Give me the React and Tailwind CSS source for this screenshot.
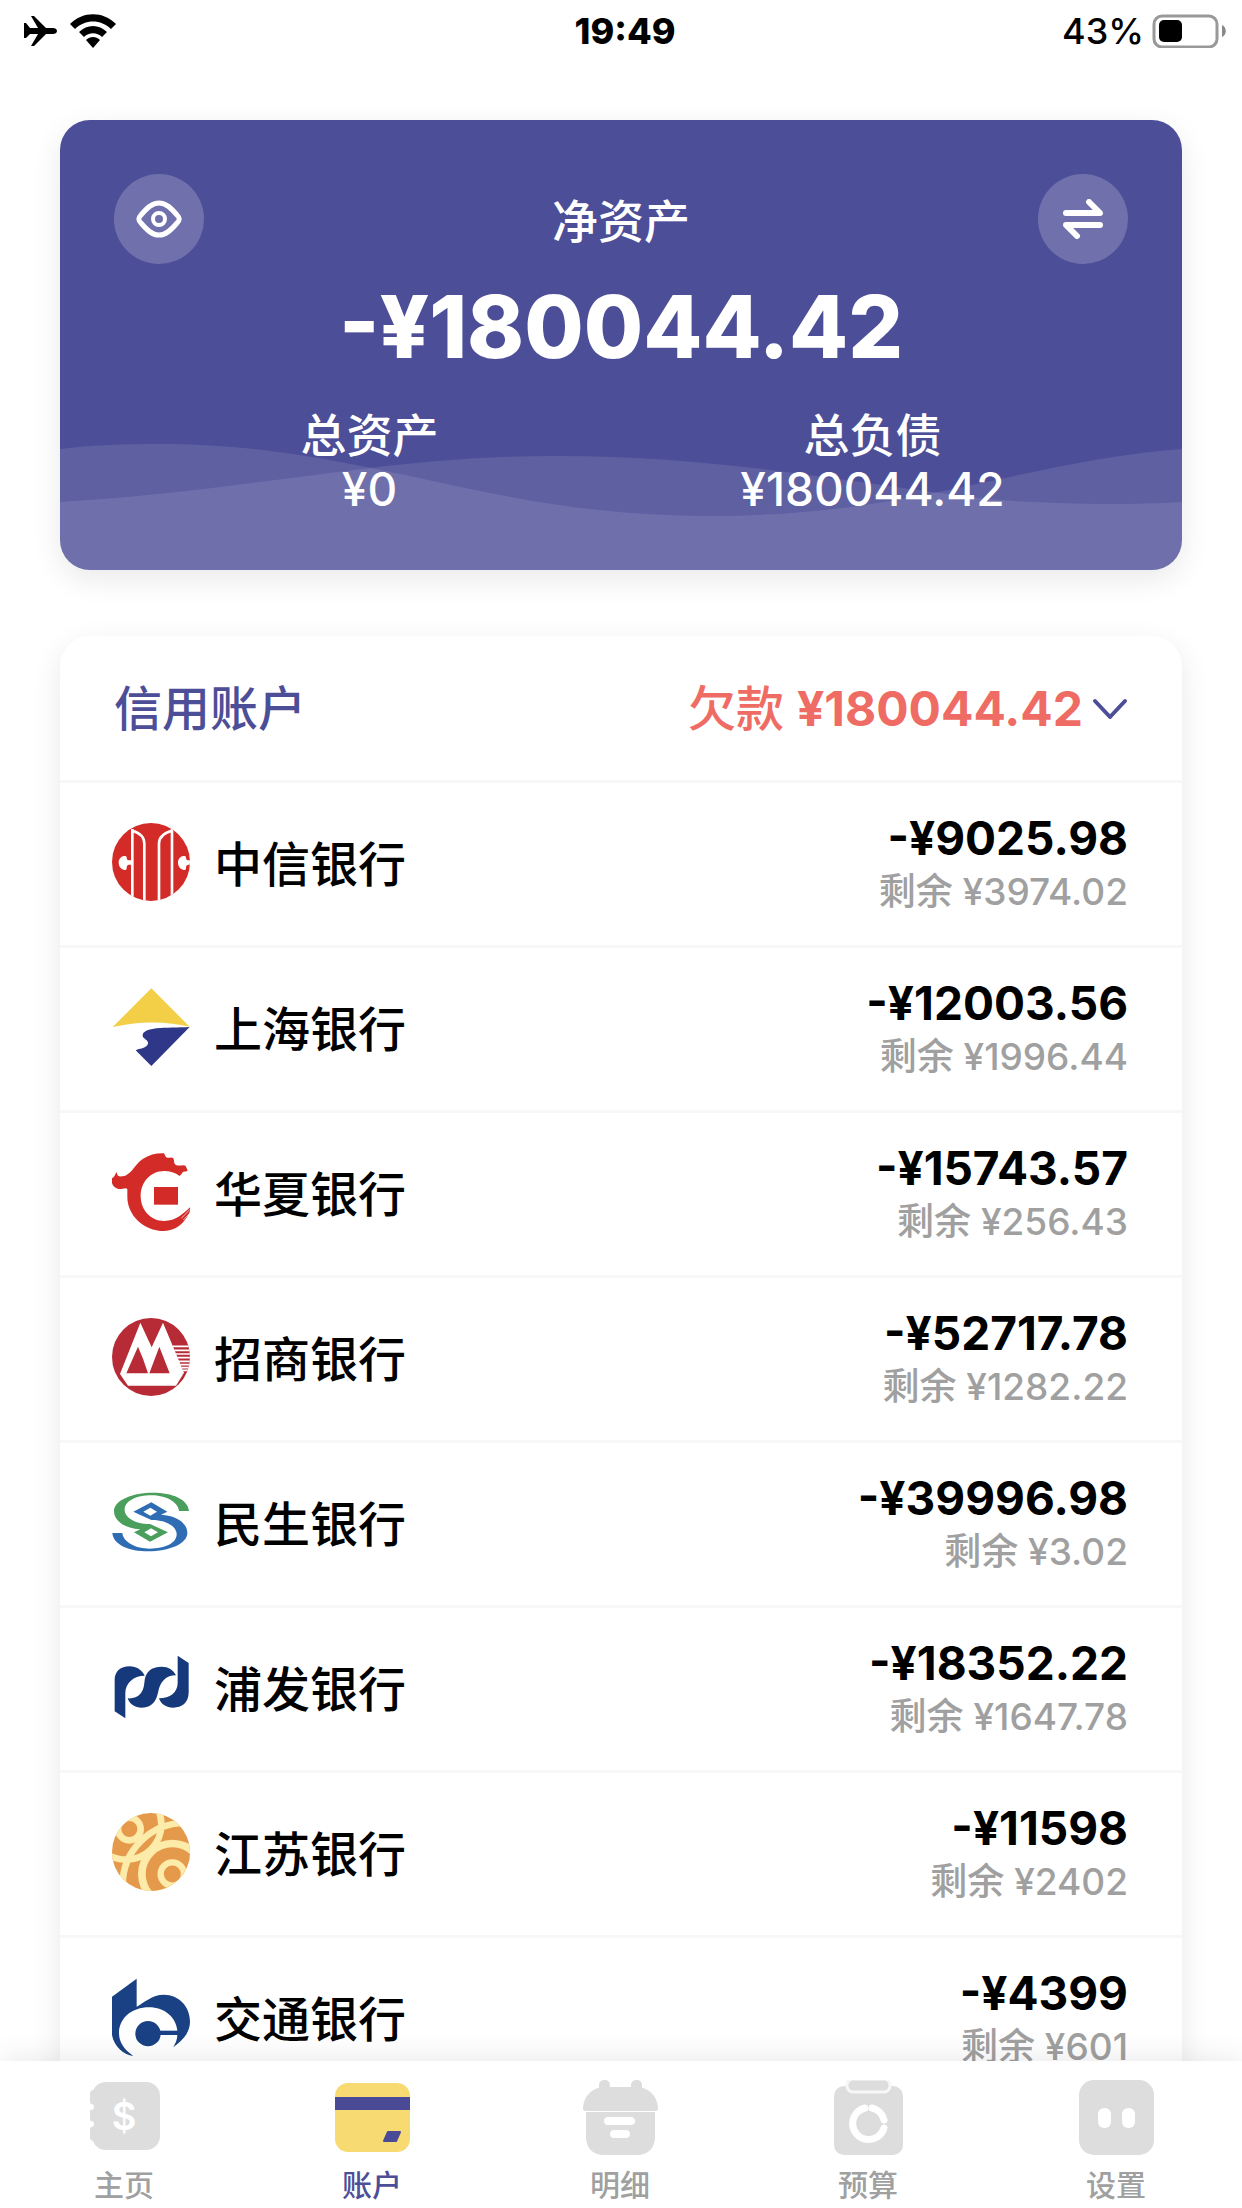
import React, { useState } from 'react'

const CiticLogo = () => {
  const notch =
    'M58 112H50C46 112 44 108 44 103C43 99 40 98 36 99C26 101 20 109 20 118C20 130 26 139 37 141C42 142 44 139 44 134C44 129 46 126 50 125H58Z'
  return (
    <svg viewBox="0 0 234 234" className="w-full h-full" aria-hidden="true">
      <clipPath id="citic-clip">
        <circle cx="117" cy="117" r="117" />
      </clipPath>
      <g clipPath="url(#citic-clip)">
        <rect width="234" height="234" fill="#d32b27" />
        <g fill="none" stroke="#fff" strokeWidth="8">
          <path d="M61 18V234M180 18V234" />
          <path d="M61 23C82 29 97 42 97 62V234" />
          <path d="M180 23C157 29 141 42 141 62V234" />
        </g>
        <path fill="#fff" d={notch} />
        <path fill="#fff" d={notch} transform="translate(178 0)" />
      </g>
    </svg>
  )
}

const ShanghaiLogo = () => (
  <svg viewBox="0 0 234 234" className="w-full h-full" aria-hidden="true">
    <path fill="#f3cf47" d="M118 1L233 116C170 102 100 96 2 117Z" />
    <path
      fill="#2f3888"
      d="M233 117L118 234L71 187C82 181 88 183 98 178C109 172 111 164 104 157C99 152 91 149 92 141C93 130 110 124 134 121C160 118 200 119 233 117Z"
    />
  </svg>
)

const HuaxiaLogo = () => (
  <svg viewBox="0 0 234 234" className="w-full h-full" aria-hidden="true">
    <path
      fill="#d32b27"
      d="M14 57C15 68 20 72 32 70C44 68 50 61 59 53C70 40 78 28 92 18C112 5 134 0 156 1L162 13C170 17 178 10 184 16C188 23 184 31 192 36C201 41 215 33 221 39L227 53C218 57 212 54 211 60L203 69C190 59 174 54 156 54C116 54 86 87 86 129C86 171 116 204 156 204C192 204 214 182 234 163V175C218 212 190 234 156 234C94 234 46 186 46 131V108C40 102 30 110 19 108C9 106 2 98 0 91V76C7 73 9 64 14 57Z"
    />
    <path d="M208 196L234 169M214 201L234 180" stroke="#fff" strokeWidth="2" />
    <rect x="126" y="102" width="72" height="53" fill="#d32b27" />
  </svg>
)

const CmbLogo = () => (
  <svg viewBox="0 0 234 234" className="w-full h-full" aria-hidden="true">
    <clipPath id="cmb-clip">
      <circle cx="117" cy="117" r="117" />
    </clipPath>
    <g clipPath="url(#cmb-clip)">
      <rect width="234" height="234" fill="#b62b36" />
      <path fill="#fff" d="M85 14L24 168L48 203H192L216 164L153 14L119 88Z" />
      <path fill="#b62b36" d="M78 86L43 166H108L93 122ZM142 86L173 166H112Z" />
      <path
        stroke="#fff"
        strokeWidth="5"
        d="M182 85H234M187 97H234M191 108H234M196 119H234M200 130H234M205 140H234M209 149H234M211 157H234"
      />
    </g>
  </svg>
)

const MinshengLogo = () => {
  const half =
    'M231 84H201C198 56 160 37 119 37C72 37 38 54 38 80C38 106 75 124 114 123L168 148L114 176L66 148L85 139C35 136 6 112 6 84C6 52 60 29 124 29C180 29 228 48 231 84ZM117 136L97 148L117 160L138 148Z'
  return (
    <svg viewBox="0 0 234 234" className="w-full h-full" aria-hidden="true">
      <path fill="#4b9f5c" fillRule="evenodd" d={half} />
      <path fill="#2e6db4" fillRule="evenodd" d={half} transform="rotate(180 116 117)" />
    </svg>
  )
}

const SpdLogo = () => (
  <svg viewBox="0 0 234 234" className="w-full h-full" aria-hidden="true">
    <g fill="#15397a">
      <path d="M8 190V96C8 70 26 55 52 55C74 55 90 66 98 83C65 83 40 105 40 135V211Z" />
      <path d="M192 82C184 65 169 56 149 56C119 56 99 70 97 105C94 135 79 153 47 151C54 170 69 179 89 179C124 179 134 155 139 130C144 105 159 82 192 82Z" />
      <path d="M197 23L230 45V133C230 165 209 179 184 179C162 179 146 168 141 151C174 151 197 133 197 105Z" />
    </g>
  </svg>
)

const JiangsuLogo = () => (
  <svg viewBox="0 0 234 234" className="w-full h-full" aria-hidden="true">
    <clipPath id="jiangsu-clip">
      <circle cx="117" cy="117" r="117" />
    </clipPath>
    <g clipPath="url(#jiangsu-clip)">
      <rect width="234" height="234" fill="#e59a4b" />
      <g fill="none" stroke="#fdebaa">
        <circle cx="42" cy="34" r="106" strokeWidth="20" />
        <circle cx="218" cy="216" r="186" strokeWidth="20" />
        <circle cx="52" cy="48" r="34" strokeWidth="20" />
      </g>
      <circle cx="181" cy="183" r="103" fill="#fdebaa" />
      <circle cx="181" cy="183" r="80" fill="#e59a4b" />
      <circle cx="181" cy="183" r="35" fill="none" stroke="#fdebaa" strokeWidth="19" />
    </g>
  </svg>
)

const BocomLogo = () => (
  <svg viewBox="0 0 234 234" className="w-full h-full" aria-hidden="true">
    <g fill="#1a4183">
      <path d="M74 2L0 56V171C6 205 36 232 64 234C34 214 21 190 21 166C21 120 60 88 111 88C158 88 192 118 196 158V171C196 185 190 196 184 208C205 190 234 170 234 130C234 85 200 50 156 50C120 50 95 75 74 86Z" />
      <circle cx="108" cy="167" r="38" />
      <rect x="138" y="158" width="60" height="13" />
    </g>
  </svg>
)

const accounts = [
  { name: '中信银行', logo: CiticLogo, balance: '-¥9025.98', left: '¥3974.02' },
  { name: '上海银行', logo: ShanghaiLogo, balance: '-¥12003.56', left: '¥1996.44' },
  { name: '华夏银行', logo: HuaxiaLogo, balance: '-¥15743.57', left: '¥256.43' },
  { name: '招商银行', logo: CmbLogo, balance: '-¥52717.78', left: '¥1282.22' },
  { name: '民生银行', logo: MinshengLogo, balance: '-¥39996.98', left: '¥3.02' },
  { name: '浦发银行', logo: SpdLogo, balance: '-¥18352.22', left: '¥1647.78' },
  { name: '江苏银行', logo: JiangsuLogo, balance: '-¥11598', left: '¥2402' },
  { name: '交通银行', logo: BocomLogo, balance: '-¥4399', left: '¥601' }
]

const HomeIcon = () => (
  <svg viewBox="0 0 75 75" className="w-[75px] h-[75px]" aria-hidden="true">
    <g fill="currentColor">
      <rect x="5" y="2" width="68" height="68" rx="14" />
      <rect x="3" y="10" width="12" height="15" rx="4" />
      <rect x="3" y="28" width="12" height="15" rx="4" />
      <rect x="3" y="46" width="12" height="15" rx="4" />
    </g>
    <circle cx="4" cy="27" r="3" fill="#fff" />
    <circle cx="4" cy="44" r="3" fill="#fff" />
    <text x="37" y="50" textAnchor="middle" fontSize="38" fontWeight="600" fill="#fff">$</text>
  </svg>
)

const CardIcon = () => (
  <svg viewBox="0 0 75 75" className="w-[75px] h-[75px]" aria-hidden="true">
    <rect y="3" width="75" height="69" rx="13" fill="#f8da72" />
    <rect y="17" width="75" height="13" fill="#4b4a96" />
    <path d="M53 52H65L61 61H49Z" fill="#4b4a96" stroke="#4b4a96" strokeWidth="2" strokeLinejoin="round" />
  </svg>
)

const DetailIcon = () => (
  <svg viewBox="0 0 75 75" className="w-[75px] h-[75px]" aria-hidden="true">
    <g fill="currentColor">
      <rect x="16" width="11" height="20" rx="5" />
      <rect x="48" width="11" height="20" rx="5" />
      <path d="M22 7H53C66 7 75 17 75 29C75 30 74 31 72 31H3C1 31 0 30 0 29C0 17 9 7 22 7Z" />
      <path d="M3 32H72V57C72 68 65 75 54 75H21C10 75 3 68 3 57Z" />
    </g>
    <path d="M25 41H48M31 54H43" stroke="#fff" strokeWidth="8" strokeLinecap="round" />
  </svg>
)

const BudgetIcon = () => (
  <svg viewBox="0 0 75 75" className="w-[75px] h-[75px]" aria-hidden="true">
    <rect x="3" y="6" width="69" height="69" rx="10" fill="currentColor" />
    <rect x="16" y="-1" width="43" height="13" rx="6" fill="currentColor" stroke="#f7f7f7" strokeWidth="3" />
    <g fill="none" stroke="#fff" strokeWidth="7" strokeLinecap="round">
      <path d="M34 28A16 16 0 1 0 53 48" />
      <path d="M41 28A16 16 0 0 1 53 40" />
    </g>
  </svg>
)

const SettingsIcon = () => (
  <svg viewBox="0 0 75 75" className="w-[75px] h-[75px]" aria-hidden="true">
    <rect width="75" height="75" rx="15" fill="currentColor" />
    <rect x="19" y="28" width="13" height="20" rx="6" fill="#fff" />
    <rect x="43" y="28" width="13" height="20" rx="6" fill="#fff" />
  </svg>
)

const tabs = [
  { id: 'home', label: '主页', icon: HomeIcon },
  { id: 'accounts', label: '账户', icon: CardIcon },
  { id: 'details', label: '明细', icon: DetailIcon },
  { id: 'budget', label: '预算', icon: BudgetIcon },
  { id: 'settings', label: '设置', icon: SettingsIcon }
]

const StatusBar = () => (
  <div className="grid grid-cols-3 items-center h-[60px] pt-0.5 pl-6 pr-4 text-4xl text-black">
    <div className="flex items-center gap-[13px]">
      {/* Airplane mode */}
      <svg viewBox="0 0 33 30" className="w-[33px] h-[30px]" aria-hidden="true">
        <path d="M0 7H2L6 12H14L7 0H10L22 12H29C31 12 33 13 33 15S31 18 29 18H22L10 30H7L14 18H6L2 22H0Z" />
      </svg>
      {/* Wifi */}
      <svg viewBox="0 0 46 34" className="w-[46px] h-[34px]" aria-hidden="true">
        <path d="M0 10C13-3 33-3 46 10L41 15C31 5 15 5 5 15Z" />
        <path d="M9 18C17 10 29 10 37 18L32 23C27 18 19 18 14 23Z" />
        <path d="M16 26C20 22 26 22 30 26L23 34Z" />
      </svg>
    </div>
    <div className="text-center font-extrabold">19:49</div>
    <div className="flex items-center justify-end gap-2 font-medium">
      <span>43%</span>
      <svg viewBox="0 0 74 34" className="w-[74px] h-[34px]" aria-hidden="true">
        <rect x="2" y="2" width="63" height="31" rx="8" fill="none" stroke="#999" strokeWidth="3" />
        <rect x="7" y="6" width="23" height="22" rx="5" />
        <path d="M70 11C75 13 75 21 70 23Z" fill="#888" />
      </svg>
    </div>
  </div>
)

const SummaryCard = () => (
  <section className="relative overflow-hidden rounded-[30px] bg-[#4d4e98] text-white">
    {/* Waves behind the totals */}
    <svg
      viewBox="0 0 1122 130"
      preserveAspectRatio="none"
      className="absolute inset-x-0 bottom-0 w-full h-[130px]"
      aria-hidden="true"
    >
      <g fill="#fff" fillOpacity="0.1">
        <path d="M0 9C30 5 65 4 97 4C180 4 240 14 311 28C420 50 510 76 653 76C850 76 960 22 1122 9V130H0Z" />
        <path d="M0 62C110 56 210 40 311 28C375 20 430 16 499 16C660 16 790 43 920 58C975 64 1060 66 1122 62V130H0Z" />
      </g>
    </svg>

    <div className="relative p-[54px]">
      <div className="flex items-center justify-between">
        <button
          type="button"
          aria-label="隐藏金额"
          className="flex items-center justify-center w-[90px] h-[90px] rounded-full bg-white/20"
        >
          <svg viewBox="0 0 46 38" className="w-[46px] h-[38px]" fill="none" stroke="currentColor" aria-hidden="true">
            <path
              strokeWidth="5"
              d="M5 15C11 8 16 3 23 3S35 8 41 15C44 18 44 20 41 23C35 30 30 35 23 35S11 30 5 23C2 20 2 18 5 15Z"
            />
            <circle cx="23" cy="19" r="6" strokeWidth="4" />
          </svg>
        </button>
        <h1 className="pt-1 text-[46px] leading-[54px] font-medium">净资产</h1>
        <button
          type="button"
          aria-label="转账"
          className="flex items-center justify-center w-[90px] h-[90px] rounded-full bg-white/20"
        >
          <svg
            viewBox="0 0 40 40"
            className="w-10 h-10"
            fill="none"
            stroke="currentColor"
            strokeWidth="6"
            strokeLinecap="round"
            strokeLinejoin="round"
            aria-hidden="true"
          >
            <path d="M3 14H37L26 3" />
            <path d="M37 26H3L14 37" />
          </svg>
        </button>
      </div>

      <p className="text-[86px] leading-[126px] text-center font-extrabold">-¥180044.42</p>

      <dl className="grid grid-cols-2 px-1 pt-[18px] text-[46px] leading-[54px] text-center font-medium">
        <div>
          <dt>总资产</dt>
          <dd>¥0</dd>
        </div>
        <div>
          <dt>总负债</dt>
          <dd>¥180044.42</dd>
        </div>
      </dl>
    </div>
  </section>
)

const AccountRow = ({ account }) => {
  const Logo = account.logo
  return (
    <li className="flex items-center justify-between border-t-[3px] border-[#f7f7f7] pt-7 pb-[26px] pl-[52px] pr-[54px]">
      <div className="flex items-center gap-6">
        <div className="w-[78px] h-[78px] mb-1.5">
          <Logo />
        </div>
        <span className="text-5xl font-medium">{account.name}</span>
      </div>
      <div className="text-right">
        <p className="text-[46px] leading-[54px] font-bold">{account.balance}</p>
        <p className="text-[37px] leading-[54px] font-medium text-[#a0a0a0]">剩余 {account.left}</p>
      </div>
    </li>
  )
}

const App = () => {
  const [activeTab, setActiveTab] = useState('accounts')
  const [isOpen, setIsOpen] = useState(true)

  return (
    <div className="flex flex-col h-screen bg-white text-black font-['Inter','Noto_Sans_CJK_SC',sans-serif]">
      <StatusBar />

      {/* Scrolling content */}
      <main className="flex-1 min-h-0 overflow-y-auto [scrollbar-width:none] px-[60px] pt-[60px] pb-[60px]">
        <div className="rounded-[30px] shadow-[0_9px_30px_rgba(0,0,0,0.09)]">
          <SummaryCard />
        </div>

        <section className="mt-[66px] rounded-[30px] bg-white shadow-[0_9px_30px_rgba(0,0,0,0.09)]">
          <button
            type="button"
            aria-expanded={isOpen}
            onClick={() => setIsOpen(!isOpen)}
            className="flex items-center justify-between w-full h-[144px] pt-0.5 px-[54px] text-5xl font-medium"
          >
            <span className="text-[#4d4e98]">信用账户</span>
            <span className="flex items-center gap-[9px] text-[#ef6c65]">
              <span>
                欠款 <span className="font-bold">¥180044.42</span>
              </span>
              <svg
                viewBox="0 0 36 22"
                className="w-9 h-[22px] text-[#4d4e98]"
                fill="none"
                stroke="currentColor"
                strokeWidth="4"
                strokeLinecap="round"
                strokeLinejoin="round"
                aria-hidden="true"
              >
                <path d="M3 3L18 19L33 3" />
              </svg>
            </span>
          </button>
          {isOpen && (
            <ul>
              {accounts.map((account) => (
                <AccountRow key={account.name} account={account} />
              ))}
            </ul>
          )}
        </section>
      </main>

      {/* Tab bar */}
      <nav className="relative grid grid-cols-5 bg-white pt-[19px] pb-[5px] pr-0.5 shadow-[0_0_30px_rgba(0,0,0,0.1)]">
        {tabs.map((tab) => {
          const Icon = tab.icon
          return (
            <button
              key={tab.id}
              type="button"
              onClick={() => setActiveTab(tab.id)}
              className="flex flex-col items-center gap-3 text-[#dddddd]"
            >
              <Icon />
              <span
                className={`text-3xl leading-9 font-medium ${
                  activeTab === tab.id ? 'text-[#4d4e98]' : 'text-[#a0a0a0]'
                }`}
              >
                {tab.label}
              </span>
            </button>
          )
        })}
      </nav>
    </div>
  )
}

export default App
